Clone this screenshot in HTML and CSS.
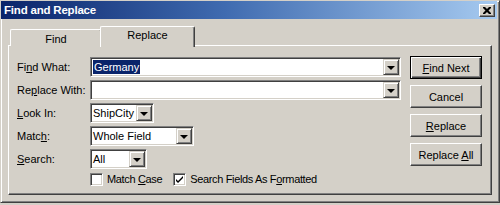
FILE: index.html
```html
<!DOCTYPE html>
<html>
<head>
<meta charset="utf-8">
<link rel="stylesheet" href="styles.css">
</head>
<body>
<div class="window">
  <div class="titlebar">
    <span class="title">Find and Replace</span>
    <span class="close"><svg width="8" height="7" viewBox="0 0 8 7"><path d="M0 0h2l2 2 2-2h2v1l-2.5 2.5L8 6v1H6L4 5 2 7H0V6l2.5-2.5L0 1z" fill="#000"/></svg></span>
  </div>
  <div class="content">
    <div class="tabs">
      <div class="tab">Find</div>
      <div class="tab active">Replace</div>
    </div>
    <div class="panel">
      <div class="form">
        <div class="row">
          <span class="lbl">Fi<u>n</u>d What:</span>
          <div class="combo w-long"><div class="field"><span class="sel">Germany</span></div><div class="drop"><i class="tri"></i></div></div>
        </div>
        <div class="row">
          <span class="lbl">Re<u>p</u>lace With:</span>
          <div class="combo w-long"><div class="field"></div><div class="drop"><i class="tri"></i></div></div>
        </div>
        <div class="row">
          <span class="lbl"><u>L</u>ook In:</span>
          <div class="combo w-look"><div class="field">ShipCity</div><div class="drop"><i class="tri"></i></div></div>
        </div>
        <div class="row">
          <span class="lbl">Matc<u>h</u>:</span>
          <div class="combo w-match"><div class="field">Whole Field</div><div class="drop"><i class="tri"></i></div></div>
        </div>
        <div class="row">
          <span class="lbl"><u>S</u>earch:</span>
          <div class="combo w-search"><div class="field">All</div><div class="drop"><i class="tri"></i></div></div>
        </div>
        <div class="checks">
          <span class="check"><span class="box"></span><span class="ctext">Match <u>C</u>ase</span></span>
          <span class="check"><span class="box"><svg width="9" height="9" viewBox="0 0 9 9"><path d="M1 4v2l2 2 5-5V1L3 6z" fill="#000"/></svg></span><span class="ctext">Search Fields As F<u>o</u>rmatted</span></span>
        </div>
      </div>
      <div class="buttons">
        <div class="btn default"><span><u>F</u>ind Next</span></div>
        <div class="btn"><span>Cancel</span></div>
        <div class="btn"><span><u>R</u>eplace</span></div>
        <div class="btn"><span>Replace <u>A</u>ll</span></div>
      </div>
    </div>
  </div>
</div>
</body>
</html>
```

FILE: styles.css
```css
* { box-sizing: border-box; }
html, body { margin: 0; padding: 0; background: #d4d0c8; }
body {
  font-family: "Liberation Sans", Arial, sans-serif;
  font-size: 11px;
  color: #000;
}
.window {
  width: 500px;
  height: 203px;
  background: #d4d0c8;
  border: 1px solid;
  border-color: #d4d0c8 #404040 #404040 #d4d0c8;
  box-shadow: inset 1px 1px #fff, inset -1px -1px #808080;
  padding: 0 2px 0 0;
  display: flex;
  flex-direction: column;
}
.titlebar {
  height: 18px;
  background: linear-gradient(to right, #0a246a 0%, #3f6bb0 45%, #a6caf0 100%);
  display: flex;
  align-items: center;
  justify-content: space-between;
  padding: 0 2px 0 3px;
}
.title {
  color: #fff;
  font-weight: bold;
  font-size: 11.5px;
  letter-spacing: -0.2px;
}
.close {
  width: 16px;
  height: 13px;
  background: #d4d0c8;
  border: 1px solid;
  border-color: #fff #404040 #404040 #fff;
  box-shadow: inset -1px -1px #808080;
  display: flex;
  align-items: center;
  justify-content: center;
  margin-top: 1px;
}
.content {
  padding: 6px 0 0 7px;
  display: flex;
  flex-direction: column;
}
.tabs {
  display: flex;
  align-items: flex-end;
  padding-left: 2px;
  height: 21px;
  position: relative;
  z-index: 2;
  margin-bottom: -1px;
}
.tab {
  height: 17px;
  width: 92px;
  border: 1px solid;
  border-bottom: none;
  border-color: #fff #404040 #fff #fff;
  box-shadow: inset -1px 0 #808080;
  border-radius: 2px 2px 0 0;
  display: flex;
  align-items: center;
  justify-content: center;
  padding-top: 1px;
  background: #d4d0c8;
}
.tab.active {
  height: 21px;
  width: 95px;
  margin-left: -2px;
  margin-bottom: -1px;
  padding-top: 0;
  padding-bottom: 4px;
}
.panel {
  width: 484px;
  height: 150px;
  border: 1px solid;
  border-color: #fff #404040 #404040 #fff;
  box-shadow: inset -1px -1px #808080;
  display: flex;
  padding: 10px 9px 0 8px;
}
.form {
  flex: 1;
  display: flex;
  flex-direction: column;
  gap: 3px;
  padding-top: 1px;
}
.row {
  display: flex;
  align-items: center;
  height: 20px;
}
.lbl {
  width: 73px;
  white-space: nowrap;
}
.combo {
  height: 20px;
  display: flex;
  background: #fff;
  border: 1px solid;
  border-color: #808080 #fff #fff #808080;
  box-shadow: inset 1px 1px #404040, inset -1px -1px #d4d0c8;
  padding: 1px;
}
.w-long { width: 311px; }
.w-look { width: 64px; }
.w-match { width: 104px; }
.w-search { width: 57px; }
.field {
  flex: 1;
  padding-left: 1px;
  line-height: 16px;
  white-space: nowrap;
  overflow: hidden;
}
.sel {
  background: #0a246a;
  color: #fff;
  padding: 1px 1px;
}
.drop {
  width: 16px;
  height: 16px;
  background: #d4d0c8;
  border: 1px solid;
  border-color: #d4d0c8 #404040 #404040 #d4d0c8;
  box-shadow: inset 1px 1px #fff, inset -1px -1px #808080;
  display: flex;
  align-items: center;
  justify-content: center;
}
.tri {
  width: 0;
  height: 0;
  border-left: 4px solid transparent;
  border-right: 4px solid transparent;
  border-top: 4px solid #000;
  margin-top: 1px;
}
.checks {
  display: flex;
  align-items: center;
  padding-left: 73px;
  height: 14px;
  gap: 11px;
}
.check {
  display: flex;
  align-items: center;
  gap: 4px;
  white-space: nowrap;
}
.ctext {
  white-space: nowrap;
  letter-spacing: -0.35px;
}
.box {
  width: 13px;
  height: 13px;
  background: #fff;
  border: 1px solid;
  border-color: #808080 #fff #fff #808080;
  box-shadow: inset 1px 1px #404040, inset -1px -1px #d4d0c8;
  display: flex;
  align-items: center;
  justify-content: center;
}
.buttons {
  width: 72px;
  display: flex;
  flex-direction: column;
  gap: 6px;
}
.btn {
  height: 23px;
  background: #d4d0c8;
  border: 1px solid;
  border-color: #fff #404040 #404040 #fff;
  box-shadow: inset -1px -1px #808080;
  display: flex;
  align-items: center;
  justify-content: center;
}
.btn.default {
  border: 1px solid #000;
  box-shadow: inset 1px 1px #fff, inset -1px -1px #404040, inset -2px -2px #808080;
}
```
